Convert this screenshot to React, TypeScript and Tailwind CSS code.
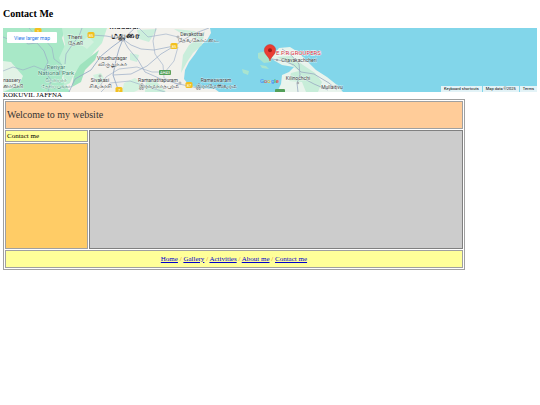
const NAV_LINKS = ['Home', 'Gallery', 'Activities', 'About me', 'Contact me'];

type MapLabel = { text: string; x: number; y: number; size: number; color?: string };

const LABELS: MapLabel[] = [
  { text: 'Theni', x: 75, y: 39, size: 6 },
  { text: 'தேனி', x: 75, y: 45, size: 6 },
  { text: 'Virudhunagar', x: 112, y: 60, size: 5 },
  { text: 'விருதுநகர்', x: 112, y: 66, size: 6 },
  { text: 'Sivakasi', x: 100, y: 82, size: 5 },
  { text: 'சிவகாசி', x: 100, y: 88, size: 6 },
  { text: 'nassery', x: 12, y: 82, size: 5 },
  { text: 'னாசேரி', x: 13, y: 88, size: 6 },
  { text: 'Periyar', x: 56, y: 69, size: 6, color: '#3f8270' },
  { text: 'National Park', x: 56, y: 75, size: 6, color: '#3f8270' },
  { text: 'பெரியார்', x: 56, y: 82, size: 5, color: '#3f8270' },
  { text: 'தேசிய பூங்கா', x: 56, y: 88, size: 5, color: '#3f8270' },
  { text: 'Devakottai', x: 192, y: 36, size: 5 },
  { text: 'தேவகோட்டை', x: 198, y: 42, size: 6 },
  { text: 'Ramanathapuram', x: 158, y: 82, size: 5 },
  { text: 'இராமநாதபுரம்', x: 159, y: 88, size: 6 },
  { text: 'Rameswaram', x: 216, y: 82, size: 5 },
  { text: 'இராமேஸ்வரம்', x: 216, y: 88, size: 6 },
  { text: 'Chavakachcheri', x: 299, y: 62, size: 5 },
  { text: 'Kilinochchi', x: 298, y: 80, size: 5 },
  { text: 'Mullaitivu', x: 332, y: 89, size: 5 },
];

const SHIELDS = [
  { text: '85', x: 91, y: 35 },
  { text: '85', x: 174, y: 46 },
  { text: '87', x: 189, y: 85 },
  { text: '7', x: 119, y: 90 },
  { text: '1', x: 38, y: 31 },
];

function MapDrawing() {
  return (
    <svg
      viewBox="3 28 534 64"
      preserveAspectRatio="xMidYMid slice"
      className="block h-full w-full"
      fontFamily="Roboto, 'Liberation Sans', sans-serif"
      aria-label="Map of Kokuvil, Jaffna"
      role="img"
    >
      <rect x="3" y="28" width="534" height="64" fill="#82d6ea" />

      {/* Indian mainland */}
      <path d="M3 28H210L211 33L207 40L200 46L195 54L189 62L185 70L184 79L188 84L198 88L215 89L219 92H3Z" fill="#f2f1ec" />
      <path d="M3 28H66L62 38L65 47L61 56L66 65L62 78L70 92H3Z" fill="#a8e8c7" />
      <path d="M62 28H107L102 43L94 52L88 61L75 72L70 83L64 86L63 68L59 58L65 45Z" fill="#c1efd5" />
      <path d="M3 61L11 62L17 69L23 76L19 85L15 87L3 92Z" fill="#e2f3e6" />
      <path d="M80 65L99 50L95 60L85 70L81 82L72 87L74 75Z" fill="#9fe3be" />
      <path d="M137 30L157 29L149 42L139 39ZM146 78L157 82L166 92H145ZM174 29L195 31L202 39L184 35ZM130 53L139 55L137 62L130 60Z" fill="#ccefdc" />
      <path d="M183 55L189 45L199 38L205 31L202 45L193 53L187 62L181 73Z" fill="#c9eddb" />
      <path d="M88 36L94 42L87 49L80 44ZM124 83L135 78L145 87L134 92H122ZM93 75L101 73L105 80L98 85Z" fill="#d3f2df" />

      {/* Roads */}
      <g fill="none" stroke="#98abc6" strokeWidth="0.7" strokeLinejoin="round">
        <path d="M3 37L13 41L20 38L28 44L37 43L44 51L48 62L44 70L51 80L48 92" />
        <path d="M3 71L13 67L23 70L34 66L44 70L54 67L65 74" strokeWidth="0.6" />
        <path d="M29 28L36 36L45 40L52 48L54 59L62 65" strokeWidth="0.6" />
        <path d="M69 92L75 79L91 70L101 56L112 47L123 39L135 28" strokeWidth="0.9" />
        <path d="M82 28L79 36L72 45L66 54L65 64" />
        <path d="M91 35L106 36L123 39L131 45L141 49L154 50L174 46L193 34L209 28" />
        <path d="M123 39L119 49L116 60L113 75L119 92" strokeWidth="0.9" />
        <path d="M123 39L128 48L138 60L145 72L161 79L179 84L198 88" />
        <path d="M113 75L131 74L147 66L161 54L176 45" />
        <path d="M100 86L106 77L119 69L137 67L152 72L165 72L174 61L178 47" strokeWidth="0.6" />
        <path d="M156 28L153 41L155 54L163 65L164 78L179 85" strokeWidth="0.6" />
        <path d="M101 92L110 83L130 81L145 86L165 92" strokeWidth="0.6" />
        <path d="M139 28L148 37L166 34L178 37" strokeWidth="0.6" />
      </g>

      {/* Sri Lanka and the islands */}
      <path d="M271 58L279 48L290 47L298 52L307 61L316 70L327 77L337 85L343 92H277L281 84L282 75L289 72L294 67L282 65L275 61Z" fill="#e9f4ed" />
      <path d="M277 57L291 56L303 65L315 73L322 82L318 92H306L302 82L289 81L291 73L299 71L290 64Z" fill="#c7edd9" />
      <path d="M258 53L266 51L272 55L271 62L264 63L258 58ZM260 65L266 66L269 69L262 68ZM242 69L249 71L248 75L243 73Z" fill="#a9e4cf" />
      <path d="M272 59L284 61L294 65L301 72L314 74L329 83L337 90M282 49L291 55L299 64L300 75L297 83L298 92M299 76L314 84L328 90" fill="none" stroke="#99a9c1" strokeWidth="0.8" />

      {/* Road numbers */}
      {SHIELDS.map((s) => (
        <g key={`${s.x}-${s.y}`}>
          <rect x={s.x - 3.5} y={s.y - 3} width="7" height="6" rx="1.5" fill="#f2c01f" />
          <text x={s.x} y={s.y + 1.5} fontSize="4" textAnchor="middle" fill="#fff">{s.text}</text>
        </g>
      ))}
      <rect x="159" y="70" width="12" height="5" rx="1" fill="#54a05a" />
      <text x="165" y="74" fontSize="4" textAnchor="middle" fill="#fff">AH43</text>
      <rect x="275" y="89" width="10" height="4" rx="1" fill="#54a05a" />

      {/* Town names */}
      <g stroke="#fff" strokeOpacity="0.6" strokeWidth="0.8" paintOrder="stroke">
        {LABELS.map((l) => (
          <text key={l.text} x={l.x} y={l.y} fontSize={l.size} textAnchor="middle" fill={l.color ?? '#3c4043'}>
            {l.text}
          </text>
        ))}
        <text x="124" y="29" fontSize="8" fontWeight="500" textAnchor="middle" fill="#202124">Madurai</text>
        <text x="125" y="38" fontSize="9" fontWeight="700" textAnchor="middle" fill="#202124">மதுரை</text>
      </g>
      <g fill="#fff" stroke="#5f6368" strokeWidth="0.5">
        <circle cx="123" cy="40" r="1" />
        <circle cx="100" cy="76" r="1" />
        <circle cx="178" cy="37" r="1" />
        <circle cx="180" cy="83" r="1" />
        <circle cx="298" cy="83" r="0.8" />
        <circle cx="277" cy="60" r="0.8" />
      </g>

      <text x="260" y="83" fontSize="6">
        <tspan fill="#4285f4">G</tspan>
        <tspan fill="#ea4335">o</tspan>
        <tspan fill="#fbbc05">o</tspan>
        <tspan fill="#4285f4">g</tspan>
        <tspan fill="#34a853">l</tspan>
        <tspan fill="#ea4335">e</tspan>
      </text>

      {/* Marker */}
      <path d="M270 61C269.500 56.500 264.300 55 264.300 50.200A5.700 5.700 0 0 1 275.700 50.200C275.700 55 270.500 56.500 270 61Z" fill="#ea3d33" stroke="#c5221f" strokeWidth="0.4" />
      <circle cx="270" cy="50.200" r="2" fill="#9f1b17" />
      <text x="276" y="55" fontSize="6" fill="#d02f3b" stroke="#fff" strokeWidth="0.8" paintOrder="stroke">E.P.R GROUPERS</text>
    </svg>
  );
}

function ContactMap() {
  return (
    <div className="relative h-16 overflow-hidden font-[Roboto,'Liberation_Sans',sans-serif]">
      <MapDrawing />
      <a href="#map" className="absolute top-1 left-1 flex h-[11px] items-center rounded-[1px] bg-white px-[7px] text-[5px] whitespace-nowrap text-[#1a73e8]">
        View larger map
      </a>
      <div className="absolute right-0 bottom-0 flex h-[6px] items-center gap-px text-[4px] leading-[6px] whitespace-nowrap text-black">
        <button type="button" className="bg-[#e3f3f7] px-[3px]">Keyboard shortcuts</button>
        <span className="bg-[#e3f3f7] px-[3px]">Map data ©2025</span>
        <a href="#terms" className="bg-[#e3f3f7] px-[3px]">Terms</a>
      </div>
    </div>
  );
}

export default function App() {
  return (
    <div className="bg-white px-[3px] pt-2 font-['Liberation_Serif',serif] text-[7px] leading-[8px] text-black">
      <h1 className="mb-2 text-[10px] leading-[12px] font-bold">Contact Me</h1>

      <ContactMap />
      <p className="leading-[7px]">KOKUVIL JAFFNA</p>

      <div className="grid w-[86.5%] grid-cols-[2fr_9fr] gap-px border border-[#a0a0a0] p-px">
        <header className="col-span-2 flex h-7 items-center border border-[#a0a0a0] bg-[#ffcc99] px-px text-[10px] leading-[12px] text-[#333]">
          Welcome to my website
        </header>

        <aside className="flex flex-col gap-px">
          <h2 className="border border-[#a0a0a0] bg-[#ffff99] px-px py-px leading-[8px]">Contact me</h2>
          <div className="flex-1 border border-[#a0a0a0] bg-[#ffcc66]" />
        </aside>
        <main className="min-h-[119px] border border-[#808080] bg-[#cccccc]" />

        <footer className="col-span-2 flex h-[18px] items-center justify-center border border-[#a0a0a0] bg-[#ffff99]">
          <nav className="text-[#e07b1a]">
            {NAV_LINKS.map((link, i) => (
              <span key={link}>
                {i > 0 && ' / '}
                <a href="#" className="text-[#0000cc] underline">{link}</a>
              </span>
            ))}
          </nav>
        </footer>
      </div>
    </div>
  );
}
